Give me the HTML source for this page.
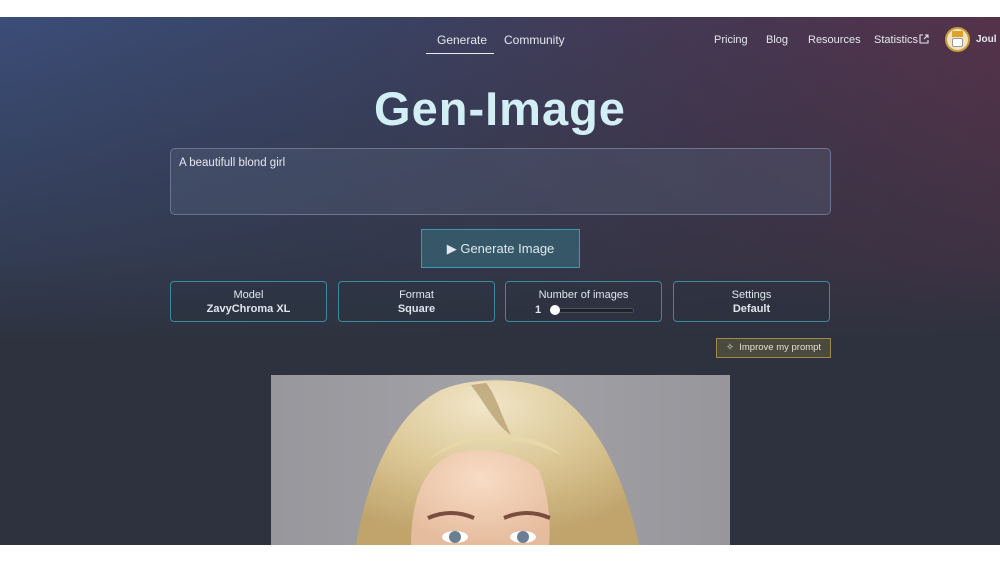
<!DOCTYPE html>
<html><head><meta charset="utf-8"><style>
*{margin:0;padding:0;box-sizing:border-box}
html,body{width:1000px;height:563px;overflow:hidden}
body{background:#fff;font-family:"Liberation Sans",sans-serif;position:relative}
#app{position:absolute;left:0;top:17px;width:1000px;height:528px;overflow:hidden;
background:linear-gradient(180deg,rgba(43,49,61,0) 0%,rgba(45,50,62,0.6) 45%,#2d323e 62%,#2d323e 100%),linear-gradient(100deg,#3b4d78 0%,#3a4262 35%,#483650 70%,#5a3148 100%);}
.a{position:absolute;color:#e4e8ee;font-size:11px;white-space:nowrap}
.box{position:absolute;border:1px solid #3d8aa0;border-radius:4px;top:264px;height:41px;width:157px;text-align:center;color:#dfe6ec;font-size:11px;background:rgba(40,50,62,0.3)}
.box .l{margin-top:7px}
.box .v{font-weight:bold;margin-top:2px}
</style></head><body>
<div id="app">
  <div class="a" style="left:437px;top:16px;font-size:12px">Generate</div>
  <div style="position:absolute;left:426px;top:36px;width:68px;height:1px;background:#e8ecf0"></div>
  <div class="a" style="left:504px;top:16px;font-size:12px">Community</div>
  <div class="a" style="left:714px;top:17px">Pricing</div>
  <div class="a" style="left:766px;top:17px">Blog</div>
  <div class="a" style="left:808px;top:17px">Resources</div>
  <div class="a" style="left:874px;top:17px">Statistics<svg width="10" height="10" viewBox="0 0 10 10" style="vertical-align:top;margin-left:1px"><path d="M4 1H1v8h8V6M6 1h3v3M9 1L5 5" stroke="#e4e8ee" fill="none" stroke-width="1.1"/></svg></div>
  <div style="position:absolute;left:945px;top:10px;width:25px;height:25px;border-radius:50%;background:#f3e4c0;border:2px solid #c89a3c"><div style="position:absolute;left:5px;top:2px;width:11px;height:6px;background:#d9a530"></div><div style="position:absolute;left:5px;top:9px;width:11px;height:9px;background:#fff;border:1px solid #999;border-radius:2px"></div></div>
  <div class="a" style="left:976px;top:17px;font-weight:bold;font-size:10px">Joul</div>

  <div style="position:absolute;left:0;width:1000px;top:64px;text-align:center;color:#d2eff5;font-size:47px;font-weight:bold;letter-spacing:1px">Gen-Image</div>

  <div style="position:absolute;left:170px;top:131px;width:661px;height:67px;border:1px solid #6b7590;border-radius:5px;background:rgba(90,100,125,0.35)"></div>
  <div class="a" style="left:179px;top:140px;font-size:11.5px">A beautifull blond girl</div>

  <div style="position:absolute;left:421px;top:212px;width:159px;height:39px;border:1px solid #3a9bb0;background:#355768;color:#dfe8ee;font-size:13px;text-align:center;line-height:38px">&#9654; Generate Image</div>

  <div class="box" style="left:170px"><div class="l">Model</div><div class="v">ZavyChroma XL</div></div>
  <div class="box" style="left:338px"><div class="l">Format</div><div class="v">Square</div></div>
  <div class="box" style="left:505px"><div class="l">Number of images</div>
    <div style="position:absolute;left:29px;top:22px;font-weight:bold;font-size:11px">1</div>
    <div style="position:absolute;left:44px;top:26px;width:84px;height:5px;border-radius:3px;background:#1e2229;border:1px solid #4a4f58"></div>
    <div style="position:absolute;left:44px;top:23px;width:10px;height:10px;border-radius:50%;background:#fff"></div>
  </div>
  <div class="box" style="left:673px"><div class="l">Settings</div><div class="v">Default</div></div>

  <div style="position:absolute;left:716px;top:321px;width:115px;height:20px;border:1px solid #a08c48;background:#4a4a3e;color:#e6e2d0;font-size:9.5px;line-height:18px;padding-left:9px">✧ &nbsp;Improve my prompt</div>

  <div style="position:absolute;left:271px;top:358px;width:459px;height:170px;overflow:hidden;background:linear-gradient(90deg,#98979c,#a3a2a7 50%,#97969b)">
    <svg width="459" height="170" viewBox="0 0 459 170" style="position:absolute;left:0;top:0">
      <defs>
        <radialGradient id="h" cx="0.45" cy="0.15" r="0.8"><stop offset="0" stop-color="#f1e6c8"/><stop offset="0.5" stop-color="#dcc897"/><stop offset="1" stop-color="#c0a46c"/></radialGradient>
        <radialGradient id="f" cx="0.5" cy="0.3" r="0.7"><stop offset="0" stop-color="#f8dcc4"/><stop offset="1" stop-color="#e6bc9e"/></radialGradient>
      </defs>
      <path d="M85 170 C95 110 120 40 170 15 C200 2 250 2 280 15 C330 45 355 110 368 170 Z" fill="url(#h)"/>
      <path d="M200 10 C215 30 225 50 240 60 C230 40 225 20 215 8 Z" fill="#a98c5c" opacity="0.6"/>
      <path d="M140 170 C140 130 150 90 185 78 C220 70 250 80 268 95 C278 120 280 150 278 170 Z" fill="url(#f)"/>
      <path d="M150 92 C170 70 230 50 290 80 C270 60 200 40 150 92Z" fill="#e8d7a8"/>
      <path d="M157 143 Q180 133 203 143" stroke="#7a4e3e" stroke-width="4" fill="none"/>
      <path d="M233 143 Q256 133 279 143" stroke="#7a4e3e" stroke-width="4" fill="none"/>
      <ellipse cx="184" cy="162" rx="13" ry="6" fill="#fff"/>
      <ellipse cx="252" cy="162" rx="13" ry="6" fill="#fff"/>
      <circle cx="184" cy="162" r="6" fill="#6c7f92"/>
      <circle cx="252" cy="162" r="6" fill="#6c7f92"/>
    </svg>
  </div>
</div>
</body></html>
